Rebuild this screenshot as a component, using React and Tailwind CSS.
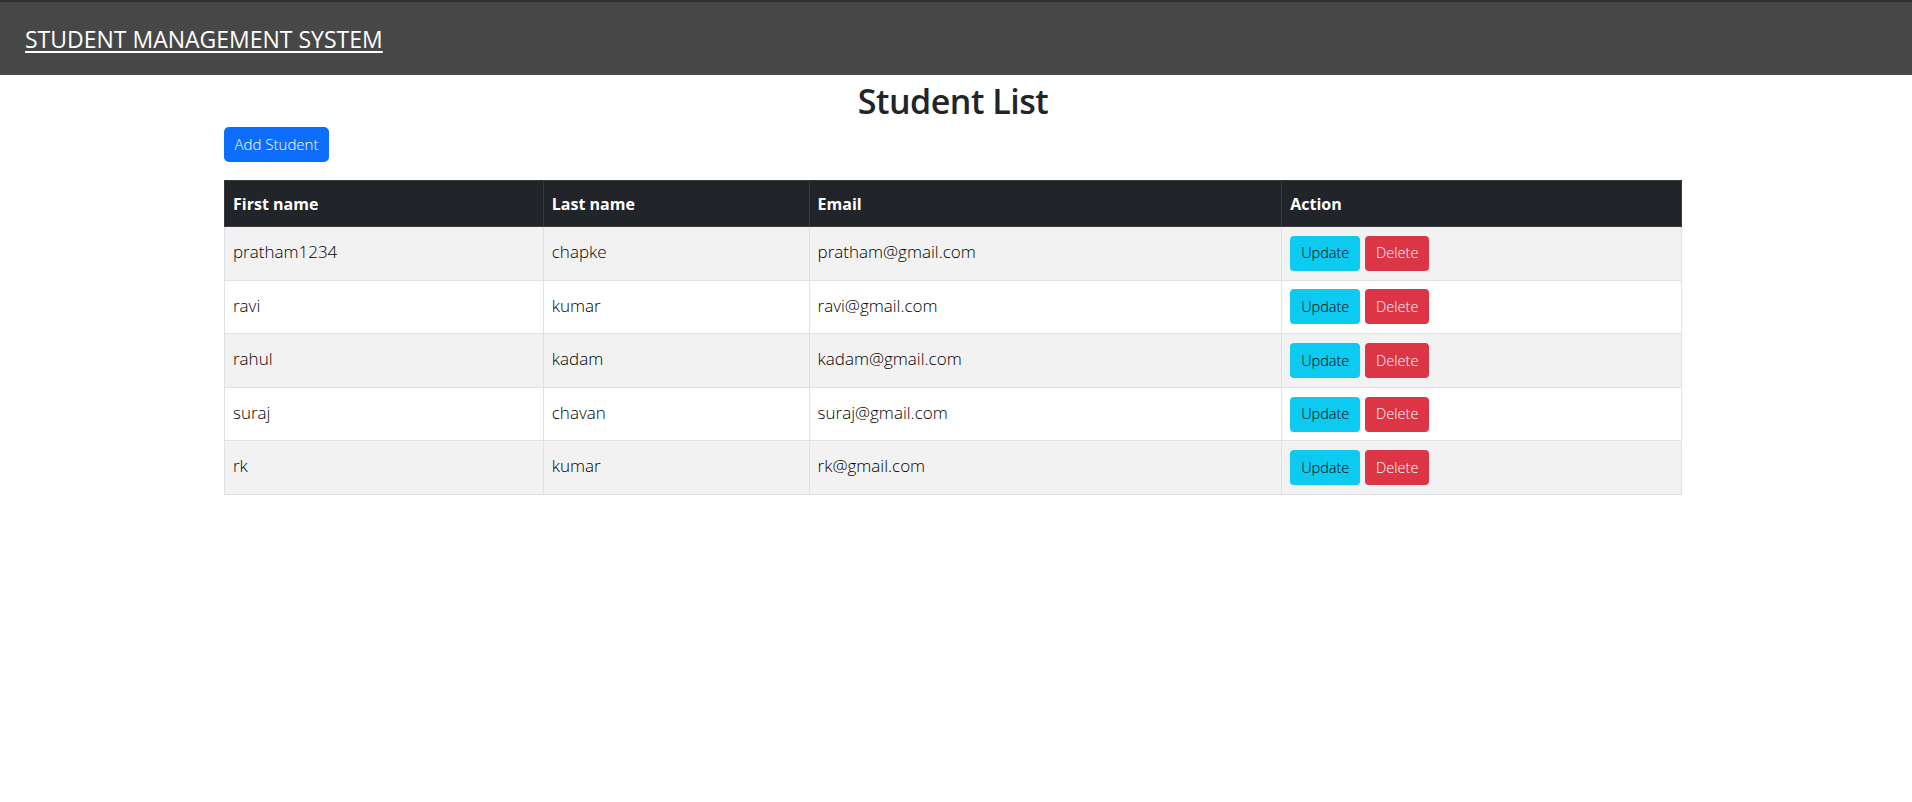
import React from "react";

const students = [
  { first: "pratham1234", last: "chapke", email: "pratham@gmail.com" },
  { first: "ravi", last: "kumar", email: "ravi@gmail.com" },
  { first: "rahul", last: "kadam", email: "kadam@gmail.com" },
  { first: "suraj", last: "chavan", email: "suraj@gmail.com" },
  { first: "rk", last: "kumar", email: "rk@gmail.com" },
];

const TH = "border border-[#373b3e] px-2 text-left align-middle font-bold text-[16px]";
const TD = "border border-[#dee2e6] px-2 align-middle";

export default function App() {
  return (
    <div className="min-h-screen bg-white font-['Open_Sans',sans-serif] text-[#212529]">
      {/* top bar */}
      <header className="h-[75px] bg-[#474747] border-t-2 border-[#2e2e2e] flex items-center pl-[25px] pt-[2px]">
        <a href="#" className="text-white text-[23px] font-medium underline underline-offset-[3px] decoration-[2px]">
          STUDENT MANAGEMENT SYSTEM
        </a>
      </header>

      <div className="ml-[224px] w-[1458px]">
        <h2 className="text-center text-[34px] font-semibold leading-[52px] tracking-[-0.5px]">
          Student List
        </h2>
        <button className="h-[35px] w-[105px] rounded-[5px] bg-[#0d6efd] text-white text-[15px] font-light">
          Add Student
        </button>

        <table className="mt-[18px] w-full border-collapse">
          <colgroup>
            <col className="w-[319px]" />
            <col className="w-[266px]" />
            <col className="w-[473px]" />
            <col className="w-[400px]" />
          </colgroup>
          <thead>
            <tr className="h-[46px] bg-[#212529] text-white">
              <th className={TH}>First name</th>
              <th className={TH}>Last name</th>
              <th className={TH}>Email</th>
              <th className={TH}>Action</th>
            </tr>
          </thead>
          <tbody className="text-[17px] font-light text-black">
            {students.map((s, i) => (
              <tr key={i} className={`h-[53.6px] ${i % 2 === 0 ? "bg-[#f2f2f2]" : "bg-white"}`}>
                <td className={TD}><div className="-mt-[3px]">{s.first}</div></td>
                <td className={TD}><div className="-mt-[3px]">{s.last}</div></td>
                <td className={TD}><div className="-mt-[3px]">{s.email}</div></td>
                <td className={TD}>
                  <div className="flex gap-[5px]">
                    <button className="h-[35px] w-[70px] rounded-[4px] bg-[#0dcaf0] text-black text-[14.5px] font-light">
                      Update
                    </button>
                    <button className="h-[35px] w-[64px] rounded-[4px] bg-[#dc3545] text-white text-[14.5px] font-light">
                      Delete
                    </button>
                  </div>
                </td>
              </tr>
            ))}
          </tbody>
        </table>
      </div>
    </div>
  );
}
